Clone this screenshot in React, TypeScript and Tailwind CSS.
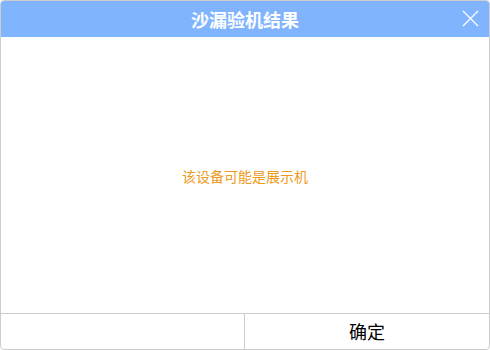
export default function App() {
  return (
    <div className="w-[490px] h-[350px] bg-white" style={{ fontFamily: '"Microsoft YaHei", "Noto Sans CJK SC", sans-serif' }}>
      <div className="flex h-full flex-col overflow-hidden rounded-[4px] border border-[#cccccc]">
        {/* Header */}
        <div className="relative flex h-[37px] shrink-0 items-center justify-center bg-[#80b4ff] -mx-px -mt-px">
          <span className="text-[18px] font-bold leading-none text-white">沙漏验机结果</span>
          <button className="absolute right-[11px] top-[10px] h-[17px] w-[17px]">
            <svg viewBox="0 0 17 17" className="h-[17px] w-[17px]" stroke="white" strokeWidth="1.2" fill="none">
              <path d="M1 1 L16 16 M16 1 L1 16" />
            </svg>
          </button>
        </div>
        {/* Body */}
        <div className="flex flex-1 items-center justify-center pt-[3px]">
          <span className="text-[14px] text-[#ee9a22]">该设备可能是展示机</span>
        </div>
        {/* Footer */}
        <div className="grid h-[36px] shrink-0 grid-cols-2 border-t border-[#cccccc]">
          <button className="border-r border-[#cccccc]"></button>
          <button className="text-[18px] text-black">确定</button>
        </div>
      </div>
    </div>
  )
}
